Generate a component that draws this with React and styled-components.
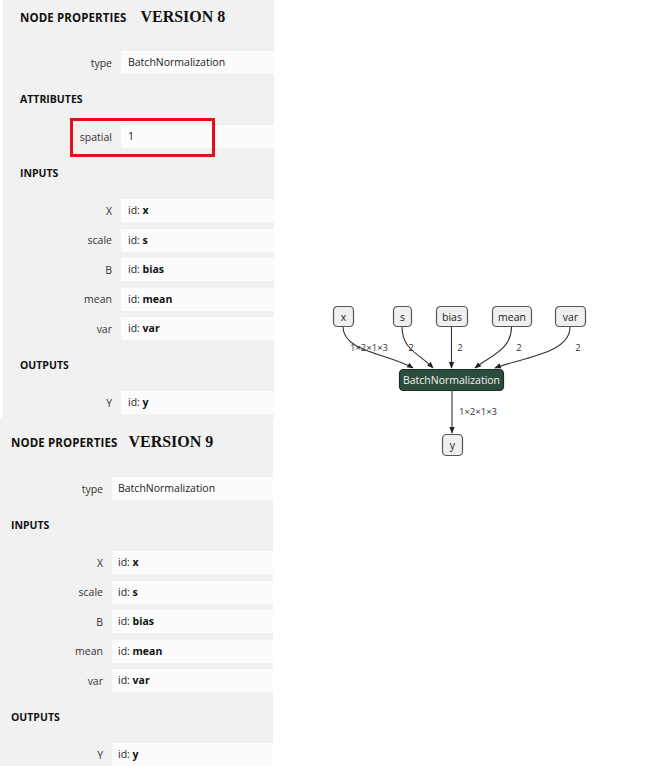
import React from "react";
import styled, { createGlobalStyle } from "styled-components";

const Global = createGlobalStyle`
  html, body { margin: 0; padding: 0; background: #ffffff; overflow: hidden; }
  body { font-family: "Open Sans", "Noto Sans", sans-serif; color: #222; }
`;

const Page = styled.div`
  display: flex;
  align-items: flex-start;
  width: 645px;
  height: 766px;
`;

const LeftColumn = styled.div`
  display: flex;
  flex-direction: column;
  width: 274px;
`;

const Panel = styled.section`
  background: #f1f1f1;
  margin-left: ${(p) => p.$offset}px;
  width: ${(p) => 274 - p.$offset - p.$trim}px;
  padding: ${(p) => p.$padTop}px 0 ${(p) => p.$padBottom}px ${(p) => p.$padLeft}px;
  box-sizing: border-box;
  display: flex;
  flex-direction: column;
`;

const TitleBar = styled.div`
  display: flex;
  align-items: baseline;
  gap: ${(p) => p.$versionGap}px;
  height: 18px;
  margin-bottom: ${(p) => p.$gapBelow}px;
`;

const Title = styled.span`
  font-family: "Open Sans", sans-serif;
  font-weight: 700;
  font-size: 11.5px;
  letter-spacing: 0.1px;
  color: #111;
`;

const Version = styled.span`
  font-family: "Liberation Serif", "Times New Roman", serif;
  font-weight: 700;
  font-size: 16px;
  color: #111;
`;

const Header = styled.div`
  font-family: "Open Sans", sans-serif;
  font-weight: 700;
  font-size: 10.5px;
  line-height: 20px;
  height: 20px;
  color: #111;
  margin: 15px 0 16px;
`;

const Rows = styled.div`
  display: flex;
  flex-direction: column;
  gap: 6.5px;
  margin-left: ${(p) => -p.$padLeft}px;
`;

const Row = styled.div`
  position: relative;
  display: grid;
  grid-template-columns: ${(p) => p.$labelWidth}px 1fr;
  column-gap: 9px;
  height: 23px;
  align-items: center;
`;

const Label = styled.div`
  text-align: right;
  font-size: 10.5px;
  color: #333;
`;

const Value = styled.div`
  height: 23px;
  line-height: 23px;
  background: #fcfcfc;
  padding-left: ${(p) => p.$pad}px;
  font-size: 10.5px;
  color: #222;
  white-space: nowrap;
  overflow: hidden;
`;

const Strong = styled.b`
  font-weight: 700;
  color: #111;
`;

const Highlight = styled.div`
  position: absolute;
  left: 67px;
  top: -7px;
  width: 145px;
  height: 39px;
  border: 3px solid #e3101b;
  box-sizing: border-box;
  pointer-events: none;
`;

const GraphArea = styled.div`
  margin-left: 46px;
  margin-top: 300px;
  width: 280px;
  height: 170px;
`;

const GraphSvg = styled.svg`
  display: block;
  font-family: "Open Sans", sans-serif;
`;

function PropRow({ label, children, labelWidth, pad, highlight }) {
  return (
    <Row $labelWidth={labelWidth}>
      <Label>{label}</Label>
      <Value $pad={pad}>{children}</Value>
      {highlight && <Highlight />}
    </Row>
  );
}

const inputs = [
  ["X", "x"],
  ["scale", "s"],
  ["B", "bias"],
  ["mean", "mean"],
  ["var", "var"],
];

function Properties({ version, withAttributes, cfg }) {
  return (
    <Panel
      $offset={cfg.offset}
      $trim={cfg.trim}
      $padTop={cfg.padTop}
      $padBottom={cfg.padBottom}
      $padLeft={cfg.padLeft}
    >
      <TitleBar $gapBelow={cfg.titleGap} $versionGap={cfg.versionGap}>
        <Title>NODE PROPERTIES</Title>
        <Version>VERSION {version}</Version>
      </TitleBar>
      <Rows $padLeft={cfg.padLeft}>
        <PropRow label="type" labelWidth={cfg.labelWidth} pad={cfg.valuePad}>
          BatchNormalization
        </PropRow>
      </Rows>
      {withAttributes && (
        <>
          <Header>ATTRIBUTES</Header>
          <Rows $padLeft={cfg.padLeft}>
            <PropRow label="spatial" labelWidth={cfg.labelWidth} pad={cfg.valuePad} highlight>
              1
            </PropRow>
          </Rows>
        </>
      )}
      <Header>INPUTS</Header>
      <Rows $padLeft={cfg.padLeft}>
        {inputs.map(([l, id]) => (
          <PropRow key={l} label={l} labelWidth={cfg.labelWidth} pad={cfg.valuePad}>
            id: <Strong>{id}</Strong>
          </PropRow>
        ))}
      </Rows>
      <Header>OUTPUTS</Header>
      <Rows $padLeft={cfg.padLeft}>
        <PropRow label="Y" labelWidth={cfg.labelWidth} pad={cfg.valuePad}>
          id: <Strong>y</Strong>
        </PropRow>
      </Rows>
    </Panel>
  );
}

const v8 = { offset: 3, trim: 0, padTop: 8, padBottom: 5, padLeft: 17, titleGap: 25, versionGap: 14, labelWidth: 109, valuePad: 7 };
const v9 = { offset: 0, trim: 1, padTop: 14, padBottom: 0, padLeft: 11, titleGap: 26, versionGap: 11, labelWidth: 103, valuePad: 6 };

// graph coordinates relative to (320, 300)
const nodes = [
  { id: "x", x: 13, w: 20 },
  { id: "s", x: 73, w: 18 },
  { id: "bias", x: 116, w: 31 },
  { id: "mean", x: 172, w: 39 },
  { id: "var", x: 235, w: 30 },
];

const edges = [
  { d: "M23,27 C23,52 70,54 93,68", label: "1×2×1×3", lx: 49, ly: 51 },
  { d: "M82,27 C82,50 100,54 113,68", label: "2", lx: 91, ly: 51 },
  { d: "M131.5,27 L131.5,68", label: "2", lx: 140, ly: 51 },
  { d: "M191.5,27 C191.5,50 170,56 155,68", label: "2", lx: 199, ly: 51 },
  { d: "M250,27 C250,54 200,58 175,68", label: "2", lx: 258, ly: 51 },
];

function Graph() {
  return (
    <GraphArea>
      <GraphSvg width="280" height="170" viewBox="0 0 280 170">
        <defs>
          <marker id="arrow" viewBox="0 0 10 10" refX="9" refY="5" markerWidth="6" markerHeight="6" orient="auto-start-reverse">
            <path d="M0,1 L10,5 L0,9 z" fill="#222" />
          </marker>
        </defs>
        {edges.map((e, i) => (
          <g key={i}>
            <path d={e.d} fill="none" stroke="#333" strokeWidth="1.1" markerEnd="url(#arrow)" />
            <text x={e.lx} y={e.ly} fontSize="9.5" textAnchor="middle" fill="#333">{e.label}</text>
          </g>
        ))}
        <path d="M132,91 L132,133" fill="none" stroke="#333" strokeWidth="1.1" markerEnd="url(#arrow)" />
        <text x="158" y="115" fontSize="9.5" textAnchor="middle" fill="#333">1×2×1×3</text>
        {nodes.map((n) => (
          <g key={n.id}>
            <rect x={n.x + 0.5} y="6.5" width={n.w} height="20" rx="4" fill="#f0f0f0" stroke="#555" strokeWidth="1.2" />
            <text x={n.x + 0.5 + n.w / 2} y="20.5" fontSize="10.5" textAnchor="middle" fill="#222">{n.id}</text>
          </g>
        ))}
        <rect x="79.5" y="69.5" width="104" height="21" rx="4" fill="#2c4d3d" stroke="#1b2e25" strokeWidth="1.2" />
        <text x="131.5" y="84" fontSize="10.5" textAnchor="middle" fill="#f2f2f2">BatchNormalization</text>
        <rect x="122.5" y="134.5" width="20" height="21" rx="4" fill="#f0f0f0" stroke="#555" strokeWidth="1.2" />
        <text x="132.5" y="148.5" fontSize="10.5" textAnchor="middle" fill="#222">y</text>
      </GraphSvg>
    </GraphArea>
  );
}

export default function App() {
  return (
    <>
      <Global />
      <Page>
        <LeftColumn>
          <Properties version={8} withAttributes cfg={v8} />
          <Properties version={9} cfg={v9} />
        </LeftColumn>
        <Graph />
      </Page>
    </>
  );
}
